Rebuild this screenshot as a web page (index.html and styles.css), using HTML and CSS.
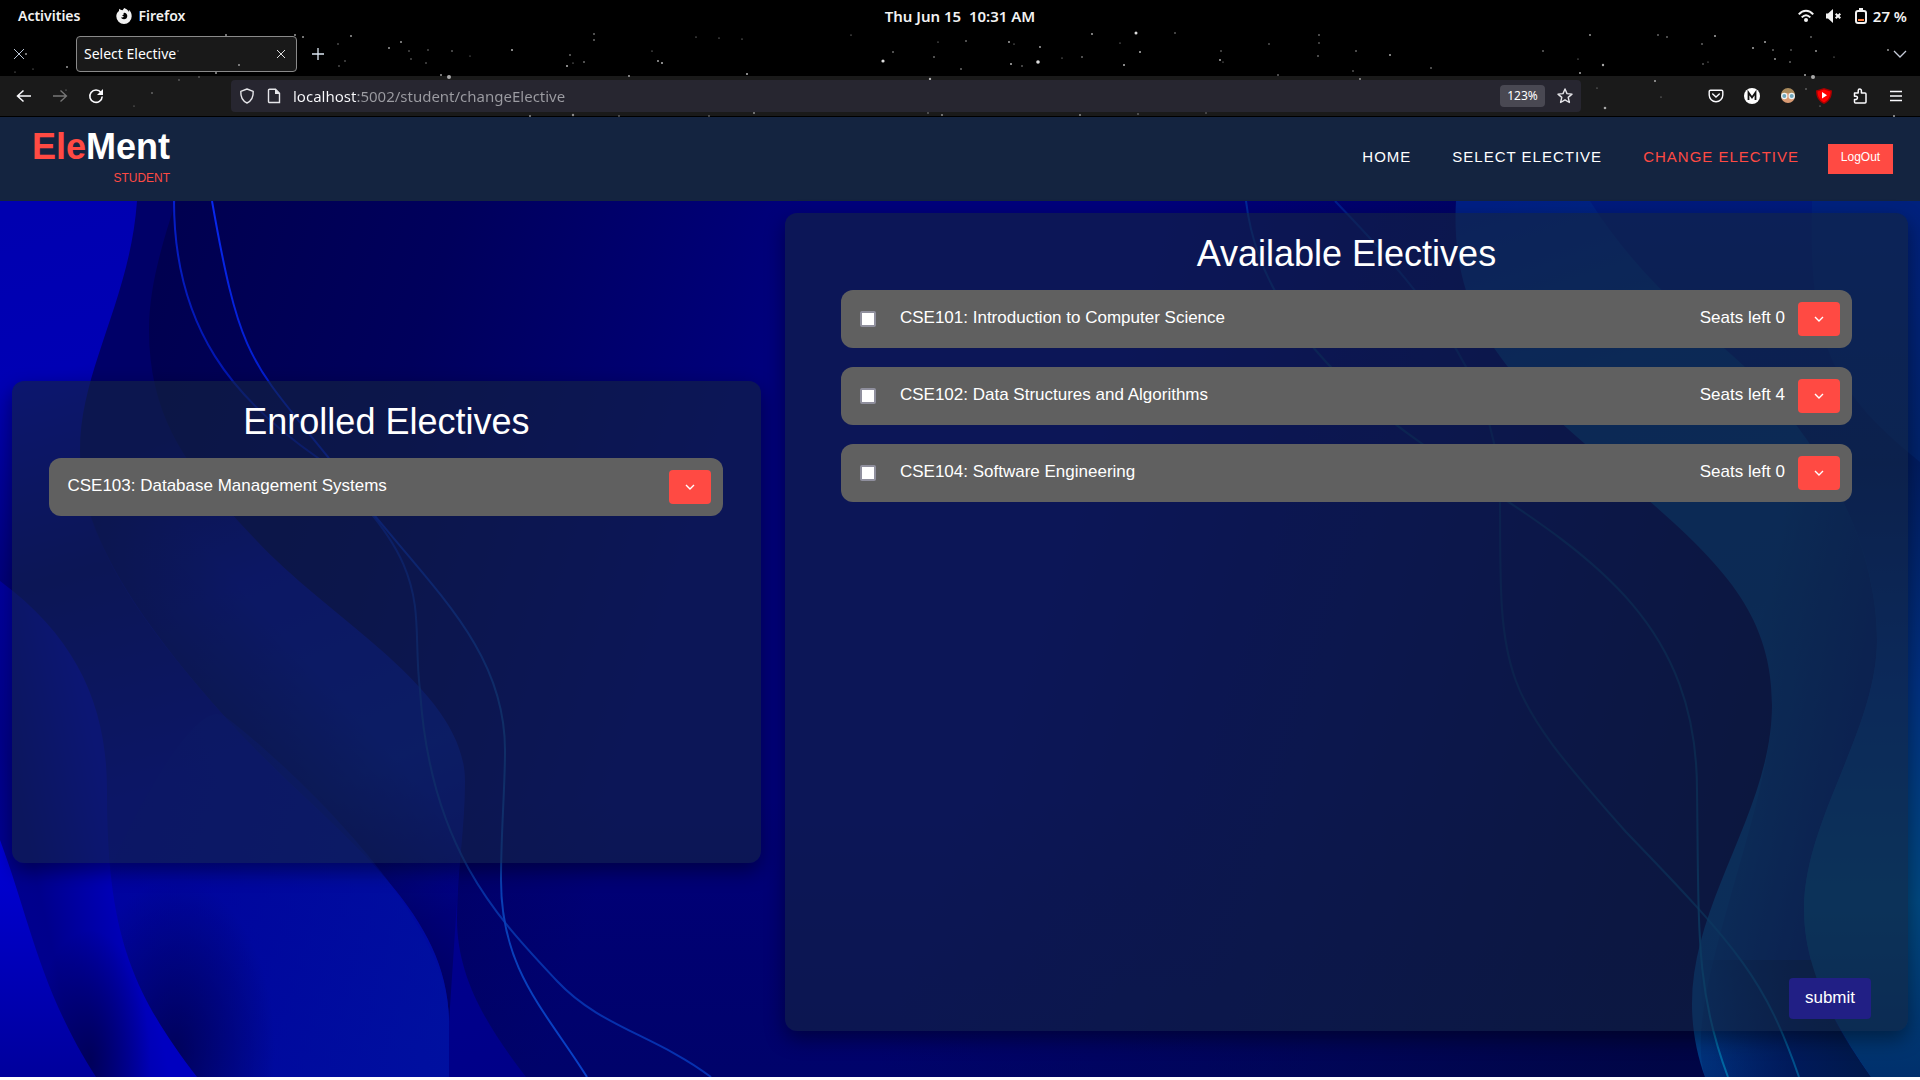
FILE: index.html
```html
<!DOCTYPE html>
<html lang="en">
<head>
<meta charset="utf-8">
<title>Select Elective</title>
<link rel="stylesheet" href="styles.css">
</head>
<body>
<div class="desktop">
  <header class="chrome">
    <svg class="stars" width="1920" height="117" viewBox="0 0 1920 117" aria-hidden="true">
      <g fill="#9a9a9a"><circle cx="26" cy="54" r="1"/><circle cx="67" cy="67" r="1"/><circle cx="226" cy="35" r="1"/><circle cx="295" cy="35" r="1"/><circle cx="303" cy="37" r="1"/><circle cx="351" cy="36" r="1"/><circle cx="338" cy="44" r=".7"/><circle cx="345" cy="61" r=".7"/><circle cx="339" cy="66" r=".7"/><circle cx="389" cy="48" r="1"/><circle cx="401" cy="42" r="1"/><circle cx="409" cy="51" r=".7"/><circle cx="411" cy="59" r=".7"/><circle cx="426" cy="63" r=".7"/><circle cx="428" cy="50" r=".7"/><circle cx="452" cy="51" r=".8"/><circle cx="470" cy="56" r=".6"/><circle cx="441" cy="75" r="1"/><circle cx="239" cy="65" r="1"/><circle cx="216" cy="73" r="1"/><circle cx="178" cy="51" r=".7"/><circle cx="199" cy="77" r=".7"/><circle cx="179" cy="80" r=".7"/><circle cx="152" cy="93" r=".8"/><circle cx="66" cy="90" r=".6"/><circle cx="134" cy="106" r=".6"/><circle cx="15" cy="72" r=".6"/><circle cx="33" cy="69" r=".6"/></g>
      <circle cx="449" cy="77" r="2" fill="#aaa"/>
      <g fill="#b5b5b5"><circle cx="512" cy="50" r="1"/><circle cx="594" cy="34" r=".8"/><circle cx="594" cy="40" r=".8"/><circle cx="570" cy="55" r=".8"/><circle cx="567" cy="66" r="1"/><circle cx="584" cy="62" r=".8"/><circle cx="573" cy="63" r=".6"/><circle cx="629" cy="76" r=".9"/><circle cx="652" cy="51" r=".6"/><circle cx="658" cy="61" r=".9"/><circle cx="662" cy="63" r="1"/><circle cx="696" cy="37" r=".6"/><circle cx="719" cy="38" r=".6"/><circle cx="742" cy="39" r=".6"/><circle cx="747" cy="74" r="1"/><circle cx="851" cy="35" r=".6"/><circle cx="893" cy="52" r=".8"/><circle cx="934" cy="57" r=".8"/><circle cx="938" cy="42" r=".6"/><circle cx="930" cy="79" r="1.2"/><circle cx="961" cy="69" r=".8"/><circle cx="966" cy="41" r=".8"/><circle cx="1009" cy="42" r=".9"/><circle cx="1014" cy="44" r=".6"/><circle cx="1011" cy="64" r="1"/><circle cx="1022" cy="66" r=".7"/><circle cx="1040" cy="47" r=".9"/><circle cx="1062" cy="58" r=".6"/><circle cx="1082" cy="57" r=".8"/><circle cx="1092" cy="34" r=".9"/><circle cx="1124" cy="65" r="1"/><circle cx="1140" cy="52" r="1"/><circle cx="1120" cy="43" r=".6"/><circle cx="1175" cy="33" r=".7"/></g>
      <g fill="#ddd"><circle cx="883" cy="61" r="1.6"/><circle cx="1038" cy="62" r="1.8"/><circle cx="1136" cy="33" r="1.5"/></g>
      <g fill="#a8a8a8"><circle cx="1221" cy="51" r=".7"/><circle cx="1220" cy="60" r="1"/><circle cx="1223" cy="62" r=".6"/><circle cx="1269" cy="44" r=".7"/><circle cx="1319" cy="35" r=".8"/><circle cx="1319" cy="43" r=".7"/><circle cx="1318" cy="56" r=".8"/><circle cx="1356" cy="51" r=".8"/><circle cx="1353" cy="71" r=".7"/><circle cx="1360" cy="79" r=".9"/><circle cx="1390" cy="55" r="1"/><circle cx="1431" cy="68" r=".8"/><circle cx="1278" cy="75" r=".8"/><circle cx="1543" cy="51" r=".8"/><circle cx="1590" cy="35" r=".9"/><circle cx="1603" cy="65" r="1.2"/><circle cx="1580" cy="73" r="1"/><circle cx="1578" cy="59" r=".6"/><circle cx="1655" cy="81" r="1"/><circle cx="1605" cy="108" r="1.3"/><circle cx="1661" cy="97" r=".6"/><circle cx="1597" cy="88" r=".6"/><circle cx="1658" cy="35" r=".8"/><circle cx="1667" cy="37" r=".8"/><circle cx="1702" cy="44" r=".8"/><circle cx="1715" cy="36" r="1"/><circle cx="1703" cy="64" r=".7"/><circle cx="1708" cy="62" r=".6"/><circle cx="1753" cy="48" r="1"/><circle cx="1765" cy="42" r="1"/><circle cx="1773" cy="50" r=".8"/><circle cx="1775" cy="59" r=".9"/><circle cx="1790" cy="62" r=".8"/><circle cx="1791" cy="50" r=".7"/><circle cx="1811" cy="37" r=".8"/><circle cx="1816" cy="51" r=".9"/><circle cx="1834" cy="57" r=".6"/><circle cx="1888" cy="50" r=".9"/><circle cx="1805" cy="75" r="1"/><circle cx="1806" cy="89" r=".7"/><circle cx="1820" cy="106" r=".6"/><circle cx="1894" cy="116" r="1"/></g>
      <circle cx="1813" cy="77" r="2" fill="#aaa"/>
      <g fill="#8d8d8d"><circle cx="530" cy="116" r="1"/><circle cx="573" cy="115" r="1.2"/><circle cx="619" cy="116" r=".8"/><circle cx="709" cy="116" r=".8"/><circle cx="754" cy="113" r="1"/><circle cx="928" cy="113" r=".8"/><circle cx="942" cy="115" r="1"/><circle cx="1080" cy="115" r="1"/><circle cx="1138" cy="114" r=".8"/><circle cx="1206" cy="113" r=".7"/></g>
    </svg>
    <div class="topbar">
      <div class="topbar-left">
        <span>Activities</span>
        <span class="app-name">
          <svg width="16" height="16" viewBox="0 0 16 16" aria-hidden="true"><path fill="#f2f2f2" d="M8.2 0 6.600 2.200C5 2 4 1.600 3.400.8 2.900 1.600 2.900 2.400 3 3 1.300 4.200.300 6 .300 8.300A7.700 7.700 0 0 0 15.700 8.300C15.700 5.200 14.300 3 12.700 1.800c.4 1 .5 1.700.4 2.300C12 2.200 10.200.7 8.200 0Z"/><path fill="#000" d="M8 4.700C9.900 4.600 11.300 6 11.300 8S9.800 11.300 8 11.300C6.500 11.300 5.300 10.500 4.900 9.300c1.100.5 2.300.1 3.100-.7L6.300 7.700c.2-.8.6-1.200 1.500-1.300C7.400 5.800 7.400 5.200 8 4.700Z"/></svg>
          Firefox
        </span>
      </div>
      <time class="clock">Thu Jun 15&nbsp; 10:31 AM</time>
      <div class="topbar-right">
        <svg width="16" height="16" viewBox="0 0 16 16" fill="none" stroke="#f2f2f2" aria-hidden="true"><path stroke-width="2" d="M.8 6.400C5 1.500 11 1.500 15.200 6.400M3.700 9.400c2.700-2.700 5.900-2.700 8.600 0"/><circle cx="8" cy="12" r="2" fill="#f2f2f2" stroke="none"/></svg>
        <svg width="16" height="16" viewBox="0 0 16 16" aria-hidden="true"><path fill="#f2f2f2" d="M0 5.500h2L7 1v14l-5-4.500H0z"/><path stroke="#f2f2f2" stroke-width="2" d="m9.700 5.700 4.600 4.600m0-4.600-4.600 4.600"/></svg>
        <span class="battery">
          <svg width="14" height="18" viewBox="0 0 14 18" aria-hidden="true"><path fill="#f2f2f2" d="M5 1h4v3H5z"/><rect x="2" y="4" width="10" height="12" rx="2" fill="none" stroke="#f2f2f2" stroke-width="2"/><path fill="#ff7f3f" d="M4 12h6v2H4z"/></svg>
          27 %
        </span>
      </div>
    </div>
    <div class="tabs">
      <button class="icon-btn" aria-label="Close window"><svg width="12" height="12" viewBox="0 0 12 12"><path d="m1 1 10 10M11 1 1 11" stroke="#b9c4d4"/></svg></button>
      <div class="tab">
        <span>Select Elective</span>
        <button class="tab-close" aria-label="Close tab"><svg width="10" height="10" viewBox="0 0 10 10"><path d="m1 1 8 8M9 1 1 9" stroke="#ddd"/></svg></button>
      </div>
      <button class="icon-btn" aria-label="New tab"><svg width="12" height="12" viewBox="0 0 12 12"><path d="M6 0v12M0 6h12" stroke="#dce6f2" stroke-width="1.300"/></svg></button>
      <button class="icon-btn tabs-menu" aria-label="List all tabs"><svg width="14" height="10" viewBox="0 0 14 10"><path d="m1 2 6 6 6-6" fill="none" stroke="#c5cbd8" stroke-width="1.300"/></svg></button>
    </div>
    <div class="toolbar">
      <button class="icon-btn" aria-label="Back"><svg width="16" height="16" viewBox="0 0 16 16" fill="none" stroke="#fbfbfe" stroke-width="1.500"><path d="M15 8H1.500M7.500 2.500 1.500 8l6 5.500"/></svg></button>
      <button class="icon-btn" aria-label="Forward"><svg width="16" height="16" viewBox="0 0 16 16" fill="none" stroke="#777" stroke-width="1.300"><path d="M1 8h13.500M8.500 2.500l6 5.500-6 5.500"/></svg></button>
      <button class="icon-btn" aria-label="Reload"><svg width="16" height="16" viewBox="0 0 16 16"><path d="M13 4.500A6.200 6.200 0 1 0 14.200 8.500" fill="none" stroke="#fbfbfe" stroke-width="1.600"/><path fill="#fbfbfe" d="M15 1v6H9z"/></svg></button>
      <span class="spring"></span>
      <div class="urlbar">
        <svg width="16" height="16" viewBox="0 0 16 16" fill="none" stroke="#e6e6ea" stroke-width="1.400" aria-hidden="true"><path d="M8 1 14.200 3.300C14.500 9 12.500 13 8 15 3.500 13 1.500 9 1.800 3.300Z" stroke-linejoin="round"/></svg>
        <svg width="14" height="16" viewBox="0 0 14 16" aria-hidden="true"><path d="M2.500 1.200h6l4 4v9.300h-10a1 1 0 0 1-1-1V2.200a1 1 0 0 1 1-1Z" fill="none" stroke="#e6e6ea" stroke-width="1.400"/><path fill="#e6e6ea" d="M8 1v5h5z"/></svg>
        <input class="url" type="text" aria-label="Address" value="localhost:5002/student/changeElective">
        <button class="zoom">123%</button>
        <svg width="16" height="16" viewBox="0 0 16 16" fill="none" stroke="#e6e6ea" stroke-width="1.400" stroke-linejoin="round" aria-hidden="true"><path d="m8 1 2 4.600 5 .5-3.800 3.300L12.400 14.500 8 11.800l-4.400 2.700L4.800 9.400 1 6.100l5-.5Z"/></svg>
      </div>
      <span class="spring"></span>
      <button class="icon-btn" aria-label="Pocket"><svg width="16" height="16" viewBox="0 0 16 16" fill="none" stroke="#fbfbfe" stroke-width="1.400"><path d="M2.500 2.200h11a1.300 1.300 0 0 1 1.300 1.300V7A6.800 6.800 0 0 1 1.200 7V3.500a1.300 1.300 0 0 1 1.300-1.300Z"/><path d="M4.700 6 8 9l3.300-3" stroke-linecap="round"/></svg></button>
      <button class="icon-btn" aria-label="Medium reader"><svg width="16" height="16" viewBox="0 0 16 16"><circle cx="8" cy="8" r="8" fill="#fff"/><path d="M4.500 12V4.500L8 9.500l3.500-5V12" fill="none" stroke="#111" stroke-width="1.800"/></svg></button>
      <button class="icon-btn" aria-label="Profile extension"><svg width="16" height="16" viewBox="0 0 16 16"><circle cx="8" cy="8" r="7" fill="#d99a73"/><path d="M1 7A7 7 0 0 1 15 7L12 5H4Z" fill="#a98a5c"/><circle cx="4.300" cy="8" r="2.600" fill="#6fa6bb" stroke="#eef4f6" stroke-width="1.200"/><circle cx="11.700" cy="8" r="2.600" fill="#6fa6bb" stroke="#eef4f6" stroke-width="1.200"/></svg></button>
      <button class="icon-btn" aria-label="Video extension"><svg width="16" height="16" viewBox="0 0 16 16"><path d="m8 0 8 2.500C16 9 13.500 13.500 8 16 2.500 13.500 0 9 0 2.500Z" fill="#a80000"/><path d="m8 1.500 6.500 2C14.300 8.700 12.300 12.300 8 14.500 3.700 12.300 1.700 8.700 1.500 3.500Z" fill="#f00"/><path fill="#fff" d="M6 4v6.500l5-3.200z"/></svg></button>
      <button class="icon-btn" aria-label="Extensions"><svg width="16" height="16" viewBox="0 0 16 16"><path d="M2.500 5h3.700V2.700a1.600 1.600 0 0 1 3.200 0V5H13a1 1 0 0 1 1 1v8a1 1 0 0 1-1 1H3.500a1 1 0 0 1-1-1v-2.500h1.700a1.700 1.700 0 0 0 0-3.300H2.500Z" fill="none" stroke="#fbfbfe" stroke-width="1.500" stroke-linejoin="round"/></svg></button>
      <button class="icon-btn" aria-label="Menu"><svg width="14" height="12" viewBox="0 0 14 12"><path d="M1 1.500h12M1 6h12M1 10.500h12" stroke="#fbfbfe" stroke-width="1.400"/></svg></button>
    </div>
  </header>

  <div class="page">
    <header class="site-header">
      <a class="logo" href="#"><span class="logo-name"><span class="accent">Ele</span>Ment</span><span class="logo-role">STUDENT</span></a>
      <nav class="nav">
        <a href="#">HOME</a>
        <a href="#">SELECT ELECTIVE</a>
        <a href="#" class="accent">CHANGE ELECTIVE</a>
        <button class="logout">LogOut</button>
      </nav>
    </header>

    <main class="content">
      <svg class="waves" viewBox="0 201 1920 876" preserveAspectRatio="none" aria-hidden="true">
        <defs>
          <linearGradient id="base" gradientUnits="userSpaceOnUse" x1="150" y1="300" x2="1750" y2="800">
            <stop offset="0" stop-color="#000050"/><stop offset=".16" stop-color="#00005c"/><stop offset=".36" stop-color="#00007c"/><stop offset=".55" stop-color="#00007c"/><stop offset=".8" stop-color="#00045c"/><stop offset="1" stop-color="#000440"/>
          </linearGradient>
          <linearGradient id="low" gradientUnits="userSpaceOnUse" x1="0" y1="800" x2="0" y2="1077">
            <stop offset="0" stop-color="#000040" stop-opacity="0"/><stop offset="1" stop-color="#000850" stop-opacity=".4"/>
          </linearGradient>
          <linearGradient id="ribbon" gradientUnits="userSpaceOnUse" x1="120" y1="201" x2="500" y2="1077">
            <stop offset="0" stop-color="#000068"/><stop offset=".25" stop-color="#000068"/><stop offset=".42" stop-color="#00049c"/><stop offset=".65" stop-color="#00129c"/><stop offset=".82" stop-color="#00008e"/><stop offset="1" stop-color="#000088"/>
          </linearGradient>
          <linearGradient id="fall" gradientUnits="userSpaceOnUse" x1="180" y1="740" x2="290" y2="640">
            <stop offset="0" stop-color="#000050" stop-opacity=".8"/><stop offset="1" stop-color="#000050" stop-opacity="0"/>
          </linearGradient>
          <linearGradient id="edge" gradientUnits="userSpaceOnUse" x1="60" y1="900" x2="450" y2="780">
            <stop offset="0" stop-color="#0000a0"/><stop offset=".35" stop-color="#00069c"/><stop offset="1" stop-color="#0014a0"/>
          </linearGradient>
          <linearGradient id="mid" gradientUnits="userSpaceOnUse" x1="60" y1="201" x2="300" y2="1077">
            <stop offset="0" stop-color="#0000b0"/><stop offset=".18" stop-color="#0000b4"/><stop offset=".4" stop-color="#000078"/><stop offset=".65" stop-color="#0000a0"/><stop offset="1" stop-color="#0010a0"/>
          </linearGradient>
          <linearGradient id="inner" gradientUnits="userSpaceOnUse" x1="0" y1="930" x2="130" y2="900">
            <stop offset="0" stop-color="#000090"/><stop offset=".35" stop-color="#00008c"/><stop offset="1" stop-color="#0000c0"/>
          </linearGradient>
          <linearGradient id="corner" gradientUnits="userSpaceOnUse" x1="0" y1="840" x2="0" y2="1077">
            <stop offset="0" stop-color="#0000d8"/><stop offset="1" stop-color="#00009c"/>
          </linearGradient>
          <radialGradient id="shade"><stop offset="0" stop-color="#00004c" stop-opacity=".8"/><stop offset="1" stop-color="#00004c" stop-opacity="0"/></radialGradient>
          <linearGradient id="right" gradientUnits="userSpaceOnUse" x1="1500" y1="201" x2="1800" y2="1077">
            <stop offset="0" stop-color="#001f84"/><stop offset=".2" stop-color="#003078"/><stop offset=".5" stop-color="#003474"/><stop offset=".75" stop-color="#003c80"/><stop offset="1" stop-color="#003a84"/>
          </linearGradient>
          <linearGradient id="fold" gradientUnits="userSpaceOnUse" x1="1740" y1="700" x2="1870" y2="730">
            <stop offset="0" stop-color="#001458" stop-opacity="0"/><stop offset="1" stop-color="#001464" stop-opacity=".8"/>
          </linearGradient>
          <linearGradient id="far" gradientUnits="userSpaceOnUse" x1="0" y1="201" x2="0" y2="1077">
            <stop offset="0" stop-color="#001a7c"/><stop offset=".3" stop-color="#001c60"/><stop offset=".55" stop-color="#003080"/><stop offset=".8" stop-color="#004880"/><stop offset="1" stop-color="#00306c"/>
          </linearGradient>
          <linearGradient id="tail" gradientUnits="userSpaceOnUse" x1="1720" y1="1077" x2="1850" y2="1030">
            <stop offset="0" stop-color="#001848" stop-opacity="0"/><stop offset="1" stop-color="#001848" stop-opacity=".9"/>
          </linearGradient>
          <linearGradient id="line" gradientUnits="userSpaceOnUse" x1="0" y1="201" x2="0" y2="1077">
            <stop offset="0" stop-color="#0828f0"/><stop offset=".3" stop-color="#0018c0"/><stop offset=".6" stop-color="#0a3ea0"/><stop offset="1" stop-color="#0840c8"/>
          </linearGradient>
          <linearGradient id="line-right" gradientUnits="userSpaceOnUse" x1="0" y1="201" x2="0" y2="1077">
            <stop offset="0" stop-color="#0030a0"/><stop offset=".2" stop-color="#002c70"/><stop offset=".6" stop-color="#003468"/><stop offset="1" stop-color="#0078b0"/>
          </linearGradient>
        </defs>
        <path fill="url(#base)" d="M0 201H1920V1077H0Z"/>
        <path fill="url(#low)" d="M0 800H1920V1077H0Z"/>
        <path fill="url(#ribbon)" d="M0 201H176C160 250 149 290 149 330C149 430 200 480 256 540C330 620 465 690 465 781C465 830 457 870 457 919C457 980 490 1030 526 1077H0Z"/>
        <path fill="url(#fall)" d="M80 450H170C190 480 220 500 256 540C330 620 465 690 465 781L449 1022C449 900 318 822 224 716S80 530 80 450Z"/>
        <path fill="url(#mid)" d="M0 201H137C130 300 80 370 80 450S125 605 224 716S449 900 449 1022V1077H0Z"/>
        <path fill="url(#edge)" opacity=".6" d="M109 871C150 780 200 700 224 716S449 900 449 1022V1077H197C130 990 109 940 109 871Z"/>
        <ellipse cx="175" cy="1050" rx="100" ry="170" fill="url(#shade)"/>
        <path fill="url(#inner)" d="M0 581C80 640 107 710 107 790C107 930 130 990 197 1077H0Z"/>
        <ellipse cx="90" cy="1060" rx="60" ry="130" fill="url(#shade)"/>
        <path fill="url(#corner)" d="M0 840C30 920 40 990 96 1077H0Z"/>
        <path fill="url(#right)" d="M1456 201C1450 310 1500 370 1584 443C1690 540 1772 590 1772 705C1772 810 1692 900 1692 1004C1692 1030 1697 1055 1705 1077H1920V201Z"/>
        <path fill="url(#fold)" d="M1590 201C1640 280 1700 325 1745 367C1820 440 1877 540 1877 640C1877 730 1804 820 1804 909C1804 970 1835 1025 1871 1077H1705C1680 1000 1772 810 1772 705C1772 590 1690 540 1584 443Z"/>
        <path fill="url(#tail)" d="M1700 960H1812C1825 1010 1845 1040 1871 1077H1705Z"/>
        <path fill="url(#far)" d="M1590 201C1640 280 1700 325 1745 367C1820 440 1877 540 1877 640C1877 730 1804 820 1804 909C1804 970 1835 1025 1871 1077H1920V201Z"/>
        <path fill="#003080" opacity=".35" d="M1812 201C1808 340 1830 390 1920 462V201Z"/>
        <g fill="none" stroke-width="2">
          <path stroke="url(#line)" opacity=".75" d="M174 201C174 330 235 400 318 458C440 570 410 610 420 690C430 850 500 920 557 981C600 1027 655 1035 711 1077"/>
          <path stroke="url(#line)" d="M212 201C240 360 250 360 328 457C420 580 505 640 505 750C505 790 501 830 501 880C501 970 545 1010 587 1077"/>
          <path stroke="url(#line-right)" opacity=".8" d="M1246 201C1260 320 1360 400 1421 443C1560 540 1697 600 1697 790C1699 930 1695 990 1728 1077"/>
          <path stroke="url(#line-right)" opacity=".6" d="M1335 201C1440 310 1500 390 1500 502C1500 680 1500 690 1626 832C1740 950 1765 980 1799 1077"/>
        </g>
      </svg>

      <section class="panel panel-enrolled">
        <h1>Enrolled Electives</h1>
        <ul class="courses">
          <li class="course">
            <span class="course-name">CSE103: Database Management Systems</span>
            <button class="toggle" aria-label="Show details"><svg width="12" height="8" viewBox="0 0 12 8"><path d="m2 2 4 4 4-4"/></svg></button>
          </li>
        </ul>
      </section>

      <form class="panel panel-available">
        <h1>Available Electives</h1>
        <ul class="courses">
          <li class="course">
            <input type="checkbox" id="cse101"><label class="course-name" for="cse101">CSE101: Introduction to Computer Science</label>
            <span class="seats">Seats left 0</span>
            <button type="button" class="toggle" aria-label="Show details"><svg width="12" height="8" viewBox="0 0 12 8"><path d="m2 2 4 4 4-4"/></svg></button>
          </li>
          <li class="course">
            <input type="checkbox" id="cse102"><label class="course-name" for="cse102">CSE102: Data Structures and Algorithms</label>
            <span class="seats">Seats left 4</span>
            <button type="button" class="toggle" aria-label="Show details"><svg width="12" height="8" viewBox="0 0 12 8"><path d="m2 2 4 4 4-4"/></svg></button>
          </li>
          <li class="course">
            <input type="checkbox" id="cse104"><label class="course-name" for="cse104">CSE104: Software Engineering</label>
            <span class="seats">Seats left 0</span>
            <button type="button" class="toggle" aria-label="Show details"><svg width="12" height="8" viewBox="0 0 12 8"><path d="m2 2 4 4 4-4"/></svg></button>
          </li>
        </ul>
        <button type="submit" class="submit">submit</button>
      </form>
    </main>
  </div>
</div>
</body>
</html>
```
FILE: styles.css
```css
* { box-sizing: border-box; }

body {
  margin: 0;
  background: #fff;
  font-family: "Liberation Sans", Arial, sans-serif;
  color: #fff;
}

button, input { font: inherit; color: inherit; border: 0; padding: 0; margin: 0; background: none; }
a { color: inherit; text-decoration: none; }
svg { display: block; flex: none; }

.desktop {
  display: flex;
  flex-direction: column;
  min-height: 100vh;
  padding-bottom: 3px;
}

/* Desktop bar and browser window */
.chrome {
  position: relative;
  overflow: hidden;
  background: #000;
  font-family: "Noto Sans", sans-serif;
  font-size: 14px;
  line-height: 20px;
  padding-bottom: 1px;
}

.stars { position: absolute; left: 0; top: 0; z-index: 1; pointer-events: none; }

.topbar {
  display: grid;
  grid-template-columns: 1fr auto 1fr;
  align-items: center;
  height: 32px;
  padding: 0 13px;
  font-weight: 600;
  color: #f2f2f2;
}
.clock, .battery { font-size: 15px; }
.topbar-left { display: flex; gap: 36px; padding-left: 5px; }
.app-name { display: flex; align-items: center; gap: 6px; }
.topbar-right { display: flex; align-items: center; justify-content: flex-end; gap: 12px; }
.battery { display: flex; align-items: center; gap: 5px; }

.tabs { display: flex; align-items: center; height: 44px; padding: 0 2px 0 1px; }
.icon-btn { display: grid; place-items: center; width: 36px; height: 36px; flex: none; }
.tab {
  display: flex;
  align-items: center;
  justify-content: space-between;
  width: 221px;
  height: 36px;
  margin: 0 3px 0 39px;
  padding: 0 10px 0 7px;
  border: 1px solid #8a8a8a;
  border-radius: 4px;
  background: #191919;
}
.tabs-menu { margin-left: auto; }

.toolbar { display: flex; align-items: center; height: 40px; padding: 0 6px; background: #1a1a1a; }
.spring { flex: 0 1 117px; }
.urlbar {
  position: relative;
  z-index: 2;
  display: flex;
  align-items: center;
  gap: 12px;
  flex: 1;
  height: 32px;
  padding: 0 8px;
  border-radius: 4px;
  background: #272630;
}
.url {
  flex: 1;
  min-width: 0;
  height: 24px;
  font-size: 15px;
  background: linear-gradient(90deg, #fbfbfe 64px, #9c9ca2 64px);
  -webkit-background-clip: text;
  background-clip: text;
  -webkit-text-fill-color: transparent;
}
.zoom { width: 45px; height: 22px; border-radius: 4px; background: #494852; font-size: 12px; line-height: 20px; }

/* Site header */
.page { display: flex; flex-direction: column; flex: 1; }
.site-header {
  display: flex;
  justify-content: space-between;
  height: 84px;
  padding: 8px 27px 0 32px;
  background: #142440;
}
.accent { color: #ff4a43; }
.logo { display: flex; flex-direction: column; align-items: flex-end; }
.logo-name { font-size: 36px; line-height: 44px; font-weight: bold; }
.logo-role { font-size: 12px; line-height: 18px; color: #ff4a43; }
.nav { display: flex; align-items: center; gap: 41px; height: 62px; font-size: 15px; letter-spacing: 1px; }
.logout {
  width: 65px;
  height: 30px;
  margin: 6px 0 0 -12px;
  padding-bottom: 4px;
  background: #ff4a43;
  font-size: 12px;
  line-height: 20px;
}

/* Electives */
.content {
  position: relative;
  display: flex;
  align-items: center;
  gap: 24px;
  flex: 1;
  padding: 12px 12px 46px;
}
.waves { position: absolute; inset: 0; width: 100%; height: 100%; }
.panel {
  position: relative;
  display: flex;
  flex-direction: column;
  min-width: 0;
  border-radius: 12px;
  background: rgba(20, 36, 64, .6);
  box-shadow: 0 8px 20px rgba(0, 0, 0, .4);
}
.panel-enrolled { flex: 2; min-height: 482px; }
.panel-available { flex: 3; align-self: stretch; padding-bottom: 12px; }
h1 { margin: 21px 0 16px; font-size: 36px; line-height: 40px; font-weight: normal; text-align: center; }
.courses { display: flex; flex-direction: column; gap: 19px; margin: 0; padding: 0 5%; list-style: none; }
.course {
  display: flex;
  align-items: center;
  height: 58px;
  padding: 0 12px 0 18px;
  border-radius: 12px;
  background: #606060;
  font-size: 17px;
  line-height: 20px;
}
.course input {
  appearance: none;
  width: 16px;
  height: 16px;
  margin: 0 24px 0 1px;
  border: 2px solid #8f8f9d;
  border-radius: 2px;
  background: #fff;
}
.course-name { flex: 1; padding-bottom: 2px; }
.seats { margin-right: 13px; padding-bottom: 2px; }
.toggle { display: grid; place-items: center; width: 42px; height: 34px; border-radius: 4px; background: #ff4a43; }
.toggle path { fill: none; stroke: #fff; stroke-width: 1.4; }
.submit {
  align-self: flex-end;
  width: 82px;
  height: 41px;
  margin: auto 37px 0 0;
  padding-bottom: 2px;
  border-radius: 4px;
  background: #211f85;
  font-size: 17px;
}
```
